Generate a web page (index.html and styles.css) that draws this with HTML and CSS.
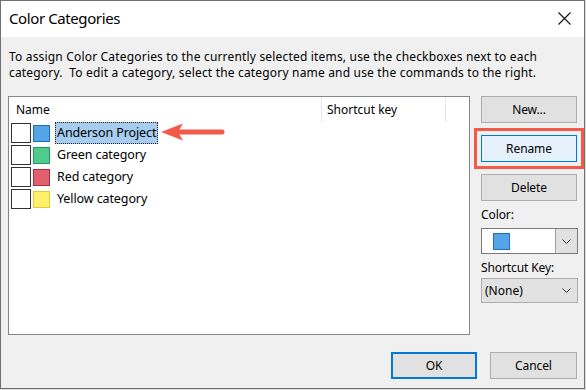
FILE: index.html
```html
<!DOCTYPE html>
<html lang="en">
<head>
  <meta charset="UTF-8" />
  <title>Color Categories</title>
  <link rel="stylesheet" href="styles.css">
</head>
<body>

  <div class="window">
    <div class="titlebar">
      <span class="title">Color Categories</span>
      <svg class="close" width="13" height="13" viewBox="0 0 13 13">
        <path d="M0.5 0.5 L12.5 12.5 M12.5 0.5 L0.5 12.5" stroke="#111" stroke-width="1.1" fill="none"/>
      </svg>
    </div>

    <div class="dialog-body">
      <p class="intro">To assign Color Categories to the currently selected items, use the checkboxes next to each<br>category.&nbsp; To edit a category, select the category name and use the commands to the right.</p>

      <div class="main">
        <div class="list">
          <div class="list-head">
            <span class="col-name">Name</span>
            <span class="col-key">Shortcut key</span>
            <span class="col-rest"></span>
          </div>

          <div class="row">
            <span class="check"></span>
            <span class="swatch blue"></span>
            <span class="label selected">Anderson Project</span>
          </div>
          <div class="row">
            <span class="check"></span>
            <span class="swatch green"></span>
            <span class="label">Green category</span>
          </div>
          <div class="row">
            <span class="check"></span>
            <span class="swatch red"></span>
            <span class="label">Red category</span>
          </div>
          <div class="row">
            <span class="check"></span>
            <span class="swatch yellow"></span>
            <span class="label">Yellow category</span>
          </div>

          <!-- annotation arrow -->
          <svg class="arrow" width="66" height="20" viewBox="0 0 66 20">
            <path d="M20 10 L62 10" stroke="#f25a4a" stroke-width="5" stroke-linecap="round"/>
            <path d="M1 10 L23 1.5 L18 10 L23 18.5 Z" fill="#f25a4a"/>
          </svg>
        </div>

        <div class="side">
          <button class="btn">New...</button>
          <div class="highlight">
            <button class="btn focused">Rename</button>
          </div>
          <button class="btn">Delete</button>

          <div class="field-label">Color:</div>
          <div class="combo">
            <span class="combo-value"><span class="swatch blue"></span></span>
            <span class="combo-drop">
              <svg width="9" height="5" viewBox="0 0 9 5"><path d="M0.5 0.5 L4.5 4.5 L8.5 0.5" stroke="#333" fill="none"/></svg>
            </span>
          </div>

          <div class="field-label">Shortcut Key:</div>
          <div class="select">
            <span>(None)</span>
            <svg width="9" height="5" viewBox="0 0 9 5"><path d="M0.5 0.5 L4.5 4.5 L8.5 0.5" stroke="#333" fill="none"/></svg>
          </div>
        </div>
      </div>

      <div class="footer">
        <button class="btn ok">OK</button>
        <button class="btn cancel">Cancel</button>
      </div>
    </div>
  </div>

</body>
</html>
```

FILE: styles.css
```css
:root {
  --face: #f0f0f0;
  --btn-bg: #e1e1e1;
  --btn-border: #adadad;
  --accent: #0078d7;
  --mark: #f25a4a;
}

body {
  margin: 0;
  background: #dcdcdc;
  font-family: 'Noto Sans', 'Open Sans', sans-serif;
  font-size: 12px;
  color: #000;
}

.window {
  width: 585px;
  height: 389px;
  box-sizing: border-box;
  border: 1px solid #6f6f6f;
  background: var(--face);
  display: flex;
  flex-direction: column;
}

/* --- Title bar --- */
.titlebar {
  height: 36px;
  background: #fff;
  display: flex;
  align-items: center;
  justify-content: space-between;
  padding: 0 13px 0 8px;
  flex-shrink: 0;
}
.title {
  font-size: 15px;
  letter-spacing: -0.4px;
  padding-bottom: 2px;
}
.close {
  display: block;
  margin-bottom: 1px;
}

/* --- Body --- */
.dialog-body {
  flex: 1;
  display: flex;
  flex-direction: column;
  padding: 12px 7px 0 7px;
}
.intro {
  margin: 0;
  line-height: 16px;
  letter-spacing: 0.18px;
  padding-left: 1px;
  white-space: nowrap;
}

.main {
  display: flex;
  gap: 11px;
  margin-top: 15px;
}

/* --- Category list --- */
.list {
  position: relative;
  width: 463px;
  height: 239px;
  box-sizing: border-box;
  border: 1px solid #828790;
  background: #fff;
}
.list-head {
  display: flex;
  height: 25px;
  align-items: stretch;
}
.list-head span {
  display: flex;
  align-items: center;
  padding-left: 7px;
  border-right: 1px solid #e5e5e5;
  padding-bottom: 1px;
}
.col-name { width: 305px; }
.col-key { width: 118px; padding-left: 5px !important; }
.col-rest { border-right: none !important; }

.row {
  display: flex;
  align-items: center;
  height: 22px;
  padding-left: 2px;
}
.check {
  width: 20px;
  height: 20px;
  box-sizing: border-box;
  border: 1px solid #333;
  background: #fff;
}
.swatch {
  display: inline-block;
  width: 17px;
  height: 17px;
  box-sizing: border-box;
  border: 1px solid;
  margin-left: 2px;
}
.swatch.blue { background: #56a4e8; border-color: #1f6fc0; }
.swatch.green { background: #4fcc8c; border-color: #1f9a58; }
.swatch.red { background: #e0606b; border-color: #b02a3a; }
.swatch.yellow { background: #fff06c; border-color: #e3cc2c; }

.label {
  margin-left: 5px;
  height: 22px;
  box-sizing: border-box;
  display: flex;
  align-items: center;
  padding: 0 2px 1px 2px;
  letter-spacing: -0.1px;
  font-size: 12.5px;
}
.label.selected {
  background: #a6cdf0;
  outline: 1px dotted #222;
  outline-offset: -1px;
}

.arrow {
  position: absolute;
  left: 151px;
  top: 25px;
}

/* --- Right-hand commands --- */
.side {
  width: 96px;
  display: flex;
  flex-direction: column;
}
.btn {
  font: inherit;
  color: #000;
  height: 27px;
  width: 96px;
  background: var(--btn-bg);
  border: 1px solid var(--btn-border);
  padding: 0 0 1px 0;
  letter-spacing: -0.1px;
}
.btn.focused {
  background: #e5f1fb;
  border-color: var(--accent);
}
.highlight {
  margin: 5px -7px;
  border: 3px solid var(--mark);
  padding: 4px;
}

.field-label {
  margin-top: 2px;
  height: 22px;
  display: flex;
  align-items: center;
  letter-spacing: -0.1px;
}
.combo {
  display: flex;
  height: 26px;
  width: 97px;
  box-sizing: border-box;
  border: 1px solid #7a7a7a;
  background: #fff;
  margin-top: 3px;
}
.combo-value {
  flex: 1;
  display: flex;
  align-items: center;
  padding-left: 9px;
}
.combo-drop {
  width: 21px;
  background: var(--btn-bg);
  border-left: 1px solid #a0a0a0;
  display: flex;
  align-items: center;
  justify-content: center;
}
.select {
  display: flex;
  align-items: center;
  justify-content: space-between;
  height: 25px;
  width: 97px;
  box-sizing: border-box;
  border: 1px solid var(--btn-border);
  background: var(--btn-bg);
  padding: 0 6px 1px 3px;
}

/* --- Footer --- */
.footer {
  display: flex;
  justify-content: flex-end;
  gap: 13px;
  margin-top: 17px;
}
.btn.ok {
  width: 86px;
  border: 2px solid var(--accent);
}
.btn.cancel {
  width: 87px;
}
```
